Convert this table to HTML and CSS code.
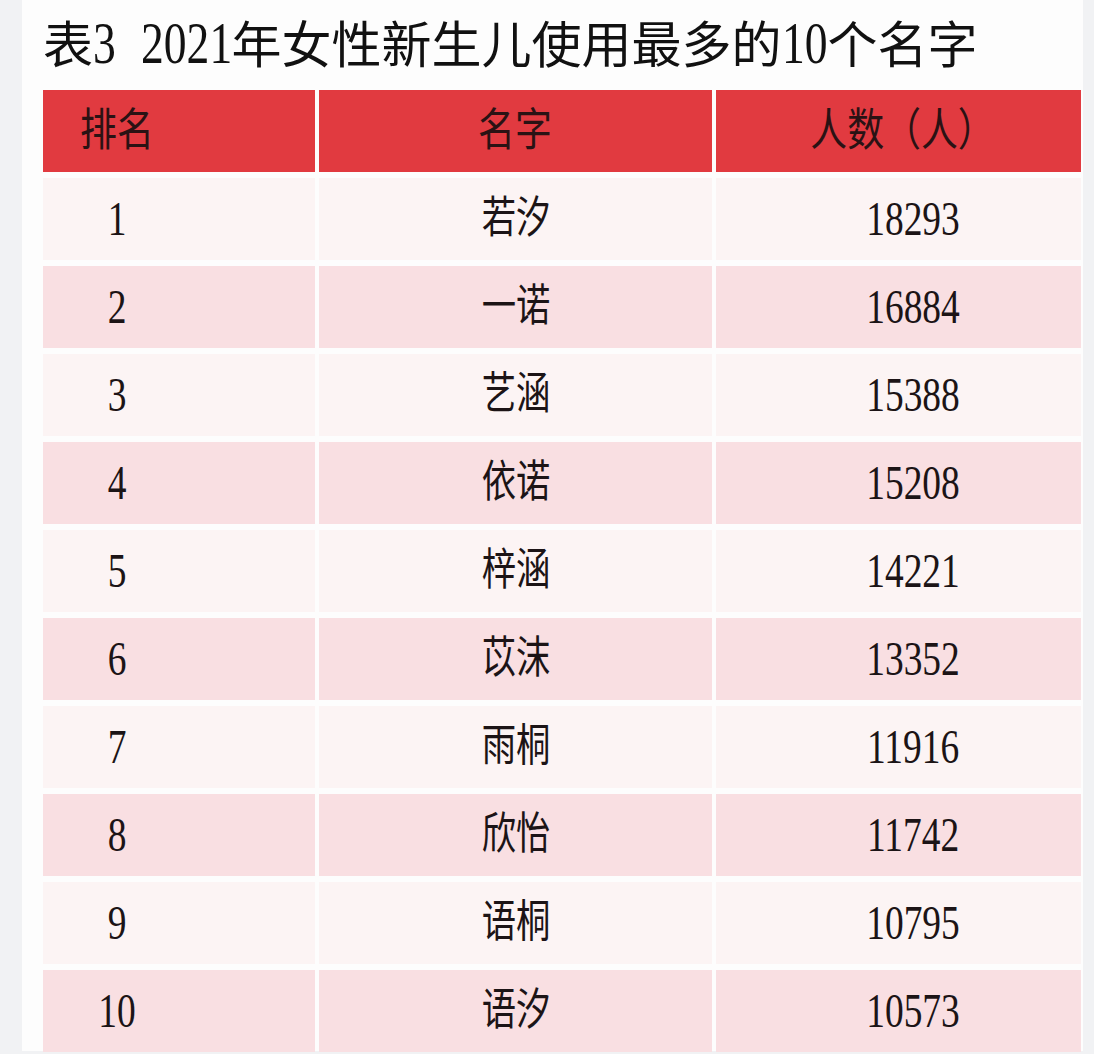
FILE: index.html
```html
<!DOCTYPE html>
<html lang="zh-CN">
<head>
<meta charset="utf-8">
<title>表3 2021年女性新生儿使用最多的10个名字</title>
<link rel="stylesheet" href="styles.css">
</head>
<body>
<div class="page">
  <h1 class="title">表<span class="num d1">3</span> <span class="num d4">2021</span>年女性新生儿使用最多的<span class="num d2">10</span>个名字</h1>
  <div class="grid">
    <div class="cell head rank"><span class="t">排名</span></div>
    <div class="cell head name"><span class="t">名字</span></div>
    <div class="cell head count"><span class="t">人数（人）</span></div>

    <div class="cell light rank"><span class="t">1</span></div><div class="cell light name"><span class="t">若汐</span></div><div class="cell light count"><span class="t">18293</span></div>
    <div class="cell pink rank"><span class="t">2</span></div><div class="cell pink name"><span class="t">一诺</span></div><div class="cell pink count"><span class="t">16884</span></div>
    <div class="cell light rank"><span class="t">3</span></div><div class="cell light name"><span class="t">艺涵</span></div><div class="cell light count"><span class="t">15388</span></div>
    <div class="cell pink rank"><span class="t">4</span></div><div class="cell pink name"><span class="t">依诺</span></div><div class="cell pink count"><span class="t">15208</span></div>
    <div class="cell light rank"><span class="t">5</span></div><div class="cell light name"><span class="t">梓涵</span></div><div class="cell light count"><span class="t">14221</span></div>
    <div class="cell pink rank"><span class="t">6</span></div><div class="cell pink name"><span class="t">苡沫</span></div><div class="cell pink count"><span class="t">13352</span></div>
    <div class="cell light rank"><span class="t">7</span></div><div class="cell light name"><span class="t">雨桐</span></div><div class="cell light count"><span class="t">11916</span></div>
    <div class="cell pink rank"><span class="t">8</span></div><div class="cell pink name"><span class="t">欣怡</span></div><div class="cell pink count"><span class="t">11742</span></div>
    <div class="cell light rank"><span class="t">9</span></div><div class="cell light name"><span class="t">语桐</span></div><div class="cell light count"><span class="t">10795</span></div>
    <div class="cell pink rank"><span class="t">10</span></div><div class="cell pink name"><span class="t">语汐</span></div><div class="cell pink count"><span class="t">10573</span></div>
  </div>
</div>
</body>
</html>
```
FILE: styles.css
```css
html, body {
  margin: 0;
  padding: 0;
}
body {
  background: #f1f2f4;
  font-family: "Liberation Serif", "Noto Sans CJK SC", serif;
  color: #1c1416;
  width: 1094px;
  height: 1054px;
  overflow: hidden;
}
.page {
  margin-left: 22px;
  width: 1061px;
  height: 1051px;
  background: #fdfdfd;
  padding-left: 21px;
  box-sizing: border-box;
}
.title {
  margin: 0;
  height: 90px;
  box-sizing: border-box;
  padding-top: 13px;
  font-size: 50px;
  line-height: 66px;
  font-weight: 400;
  word-spacing: 12px;
  color: #111;
  white-space: nowrap;
}
.num {
  display: inline-block;
  font-size: 60px;
  line-height: 1;
  font-weight: 400;
  transform: scaleX(0.76);
  transform-origin: left center;
}
.num.d1 { margin-right: -7px; }
.num.d2 { margin-right: -14px; }
.num.d4 { margin-right: -29px; }
.grid {
  display: grid;
  grid-template-columns: 272px 393px 365px;
  grid-auto-rows: 82px;
  column-gap: 4px;
  row-gap: 6px;
  width: 1038px;
}
.cell {
  display: flex;
  align-items: center;
  justify-content: center;
  font-size: 48px;
  line-height: 1;
}
.t {
  display: inline-block;
  white-space: nowrap;
  transform: scaleX(0.78);
}
.name {
  font-size: 44px;
}
.head {
  background: #e13a40;
  color: #2a1214;
  font-size: 45px;
}
.head .t {
  transform: scaleX(0.82);
}
.light {
  background: #fcf4f4;
}
.pink {
  background: #f9dfe2;
}
.rank {
  padding-right: 124px;
}
.count {
  padding-left: 29px;
}
.head.count {
  padding-left: 8px;
}
```
